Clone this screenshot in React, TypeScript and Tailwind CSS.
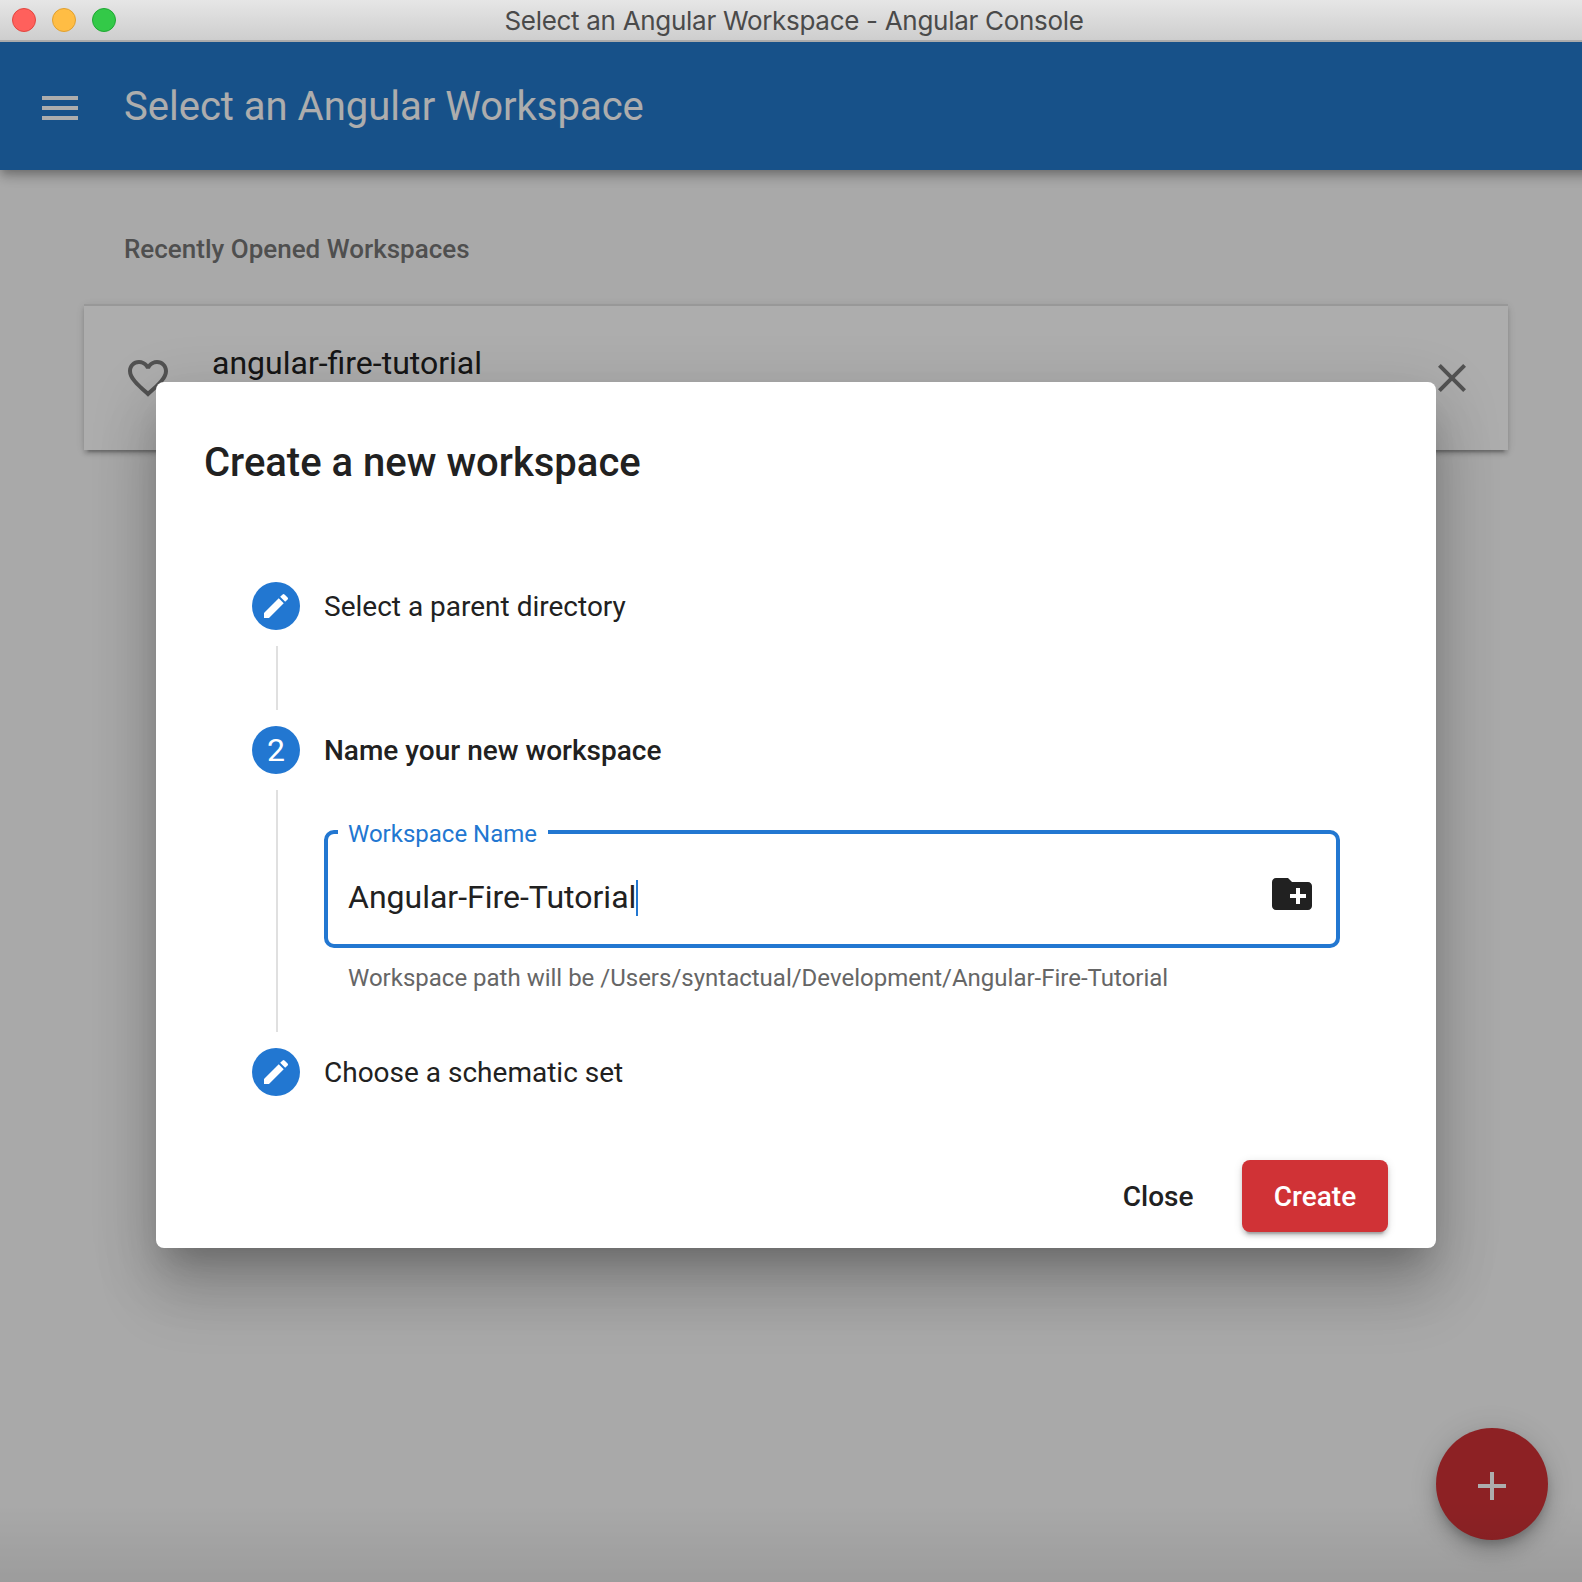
import type { ReactNode } from "react";

function Icon({ d, className }: { d: string; className?: string }) {
  return (
    <svg viewBox="0 0 24 24" fill="currentColor" className={className}>
      <path d={d} />
    </svg>
  );
}

const icons = {
  menu: "M3 18h18v-2H3v2zm0-5h18v-2H3v2zm0-7v2h18V6H3z",
  heart:
    "M16.5 3c-1.74 0-3.41.81-4.5 2.09C10.91 3.81 9.24 3 7.5 3 4.42 3 2 5.42 2 8.5c0 3.78 3.4 6.86 8.55 11.54L12 21.35l1.45-1.32C18.6 15.36 22 12.28 22 8.5 22 5.42 19.58 3 16.5 3zm-4.4 15.55l-.1.1-.1-.1C7.14 14.24 4 11.39 4 8.5 4 6.5 5.5 5 7.5 5c1.54 0 3.04.99 3.57 2.36h1.87C13.46 5.99 14.96 5 16.5 5c2 0 3.5 1.5 3.5 3.5 0 2.89-3.14 5.74-7.9 10.05z",
  close:
    "M19 6.41L17.59 5 12 10.59 6.41 5 5 6.41 10.59 12 5 17.59 6.41 19 12 13.41 17.59 19 19 17.59 13.41 12z",
  edit: "M3 17.25V21h3.75L17.81 9.94l-3.75-3.75L3 17.25zM20.71 7.04a.996.996 0 0 0 0-1.41l-2.34-2.34a.996.996 0 0 0-1.41 0l-1.83 1.83 3.75 3.75 1.83-1.83z",
  newFolder:
    "M20 6h-8l-2-2H4c-1.11 0-1.99.89-1.99 2L2 18c0 1.11.89 2 2 2h16c1.11 0 2-.89 2-2V8c0-1.11-.89-2-2-2zm-1 8h-3v3h-2v-3h-3v-2h3V9h2v3h3v2z",
  add: "M19 13h-6v6h-2v-6H5v-2h6V5h2v6h6v2z",
};

function TitleBar() {
  return (
    <div className="relative flex h-[42px] shrink-0 items-center justify-center border-b-2 border-[#ababab] bg-linear-to-b from-[#e6e6e6] to-[#cecece]">
      <div className="absolute left-3 top-2 flex gap-4">
        <span className="size-6 rounded-full border border-[#e2463f] bg-[#ff605c]" />
        <span className="size-6 rounded-full border border-[#e0a030] bg-[#ffbd44]" />
        <span className="size-6 rounded-full border border-[#1fa833] bg-[#33c948]" />
      </div>
      <span className="mt-[2px] ml-[6px] font-[Inter] text-[26px] leading-10 tracking-[-0.3px] text-[#4a4a4a]">
        Select an Angular Workspace - Angular Console
      </span>
    </div>
  );
}

function Step({
  badge,
  label,
  active,
  last,
  children,
}: {
  badge: ReactNode;
  label: string;
  active?: boolean;
  last?: boolean;
  children?: ReactNode;
}) {
  return (
    <div className="flex gap-6">
      <div className="flex w-12 flex-col items-center">
        <div className="flex size-12 shrink-0 items-center justify-center rounded-full bg-[#2277d1] text-[32px] leading-none text-white">
          {badge}
        </div>
        {!last && <div className="my-4 ml-[2px] w-[2px] grow bg-[#e0e0e0]" />}
      </div>
      <div className={last ? "grow" : "min-h-36 grow"}>
        <div className={active ? "text-[28px] leading-[50px] font-medium" : "text-[28px] leading-[50px]"}>{label}</div>
        {children}
      </div>
    </div>
  );
}

function NameField() {
  return (
    <div className="pt-[54px]">
      <fieldset className="relative h-[118px] w-[1016px]">
        <div className="absolute inset-0 rounded-[10px] border-4 border-[#2277d1]" />
        <div className="absolute top-[-12px] left-[14px] bg-white pr-[11px] pl-[10px] text-[24px] leading-8 text-[#2277d1]">
          Workspace Name
        </div>
        <div className="flex h-full items-center justify-between px-6 pt-4">
          <div className="flex items-center text-[32px] leading-9">
            Angular-Fire-Tutorial
            <span className="mt-px -mb-px h-9 w-[2px] bg-[#2277d1]" />
          </div>
          <Icon d={icons.newFolder} className="mb-[6px] size-12" />
        </div>
      </fieldset>
      <div className="mt-[14px] ml-6 h-[86px] text-[24px] leading-8 text-[#666]">
        Workspace path will be /Users/syntactual/Development/Angular-Fire-Tutorial
      </div>
    </div>
  );
}

function Dialog() {
  return (
    <div className="relative flex h-[866px] w-[1280px] flex-col rounded-lg bg-white px-12 text-[#212121] shadow-[0_22px_30px_-14px_rgba(0,0,0,0.2),0_48px_62px_2px_rgba(0,0,0,0.14),0_18px_62px_8px_rgba(0,0,0,0.13)]">
      <h2 className="mt-[49px] text-[40px] leading-16 font-medium">Create a new workspace</h2>
      <div className="mt-[87px] ml-12">
        <Step badge={<Icon d={icons.edit} className="size-8" />} label="Select a parent directory" />
        <Step badge="2" label="Name your new workspace" active>
          <NameField />
        </Step>
        <Step badge={<Icon d={icons.edit} className="size-8" />} label="Choose a schematic set" last />
      </div>
      <div className="mt-auto mb-4 flex justify-end gap-4 text-[28px] font-medium">
        <button className="h-[72px] pt-[2px] pr-[32.5px] pl-8">Close</button>
        <button className="h-[72px] w-[146px] rounded-lg bg-[#d03236] pt-[2px] text-white shadow-[0_6px_2px_-4px_rgba(0,0,0,0.2),0_4px_4px_rgba(0,0,0,0.14),0_2px_10px_rgba(0,0,0,0.12)]">
          Create
        </button>
      </div>
    </div>
  );
}

export default function App() {
  return (
    <div className="flex h-[1582px] w-[1582px] flex-col overflow-hidden bg-white font-[Roboto,sans-serif]">
      <TitleBar />
      <div className="relative flex grow flex-col overflow-hidden bg-[#fafafa]">
        <header className="relative -mr-5 flex h-32 shrink-0 items-center bg-[#2278cb] pl-9 text-white shadow-[0_4px_8px_-2px_rgba(0,0,0,0.2),0_8px_10px_rgba(0,0,0,0.14),0_2px_20px_rgba(0,0,0,0.12)]">
          <Icon d={icons.menu} className="mt-1 size-12" />
          <h1 className="mt-[2px] ml-10 text-[40px]">Select an Angular Workspace</h1>
        </header>
        <main className="px-[84px] pt-[60px]">
          <h3 className="ml-10 text-[26px] leading-[38px] font-medium text-[#757575]">Recently Opened Workspaces</h3>
          <div className="mt-9 flex h-[146px] w-[1424px] items-center border-t-2 border-[#e0e0e0] bg-white pr-8 pl-10 shadow-[0_6px_2px_-4px_rgba(0,0,0,0.2),0_4px_4px_rgba(0,0,0,0.14),0_2px_10px_rgba(0,0,0,0.12)]">
            <Icon d={icons.heart} className="size-12 text-[#7a7a7a]" />
            <div className="ml-10 grow self-start pt-[37px] text-[32px] leading-10 text-[#212121]">
              angular-fire-tutorial
            </div>
            <Icon d={icons.close} className="size-12 text-[#7a7a7a]" />
          </div>
        </main>
        <button className="absolute top-[1386px] right-[34px] flex size-28 items-center justify-center rounded-full bg-[#d03236] text-white shadow-[0_6px_10px_-2px_rgba(0,0,0,0.2),0_12px_20px_rgba(0,0,0,0.14),0_2px_36px_rgba(0,0,0,0.12)]">
          <Icon d={icons.add} className="mt-1 size-12" />
        </button>
        <div className="absolute inset-x-0 bottom-0 h-20 bg-linear-to-b from-transparent to-black/8" />
        <div className="absolute inset-0 flex items-start bg-black/32 pt-[340px] pl-[156px]">
          <Dialog />
        </div>
      </div>
    </div>
  );
}
